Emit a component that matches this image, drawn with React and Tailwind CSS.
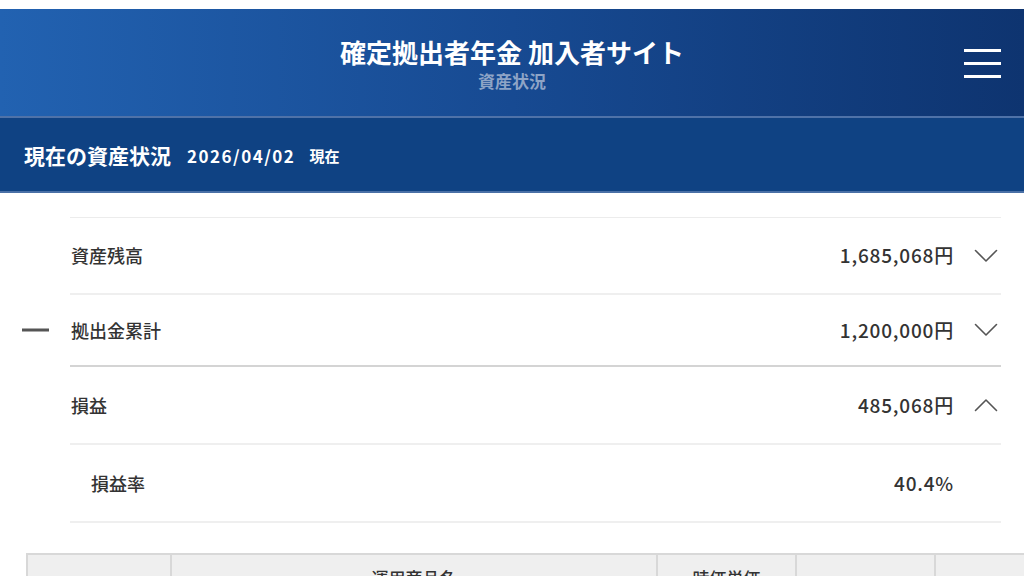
import React from 'react';

const FONT = { fontFamily: '"Noto Sans CJK JP", "Noto Sans", sans-serif' };

const Chevron = ({ up }) => (
  <svg width="24" height="14" viewBox="0 0 24 14" fill="none" stroke="#555" strokeWidth="1.6" strokeLinecap="round" strokeLinejoin="round">
    {up ? <path d="M1.5 12.5 L12 2 L22.5 12.5" /> : <path d="M1.5 1.5 L12 12 L22.5 1.5" />}
  </svg>
);

const rows = [
  { label: '資産残高', value: '1,685,068円', icon: 'down', h: 'h-[77px]' },
  { label: '拠出金累計', value: '1,200,000円', icon: 'down', h: 'h-[72px]', dash: true, strong: true },
  { label: '損益', value: '485,068円', icon: 'up', h: 'h-[78px]' },
  { label: '損益率', value: '40.4%', h: 'h-[78px]', indent: true },
];

export default function App() {
  return (
    <div className="w-[1024px] min-h-[576px] bg-white overflow-hidden" style={FONT}>
      <div className="h-[9px] bg-white" />

      {/* header */}
      <header className="relative h-[109px] bg-gradient-to-r from-[#2262b1] via-[#174a92] to-[#0e3470] border-b-2 border-[#4f72a8] flex flex-col items-center justify-center">
        <h1 className="text-white text-[26px] font-bold leading-none mt-[2px]">確定拠出者年金 加入者サイト</h1>
        <p className="text-[#8ea4c6] text-[17px] font-bold leading-none mt-[7px]">資産状況</p>
        <button className="absolute right-[23px] top-[40px] flex flex-col gap-[10px]">
          <span className="block w-[37px] h-[3px] bg-white" />
          <span className="block w-[37px] h-[3px] bg-white" />
          <span className="block w-[37px] h-[3px] bg-white" />
        </button>
      </header>

      {/* status bar */}
      <div className="h-[75px] bg-[#0f4283] border-b-2 border-[#4a70a6] flex items-center px-6 pt-[3px] text-white">
        <span className="text-[21px] font-bold">現在の資産状況</span>
        <span className="text-[17px] font-bold ml-[16px] tracking-[1.5px]">2026/04/02</span>
        <span className="text-[15px] font-bold ml-[14px]">現在</span>
      </div>

      {/* summary list */}
      <div className="mt-[24px] ml-[70px] mr-[23px] border-t border-[#ececec]">
        {rows.map((r) => (
          <div
            key={r.label}
            className={`relative flex items-center ${r.h} ${r.strong ? 'border-b-2 border-[#d4d4d4]' : 'border-b-2 border-[#efefef]'}`}
          >
            {r.dash && <span className="absolute left-[-48px] top-1/2 w-[27px] h-[3px] bg-[#555] -translate-y-1/2" />}
            <span className={`text-[18px] font-medium text-[#333] ${r.indent ? 'ml-[21px]' : 'ml-[1px]'}`}>{r.label}</span>
            <span className="ml-auto text-[19px] font-medium text-[#333] tracking-[0.8px]">{r.value}</span>
            <span className="w-[47px] flex justify-end items-center pr-[3px]">
              {r.icon && <Chevron up={r.icon === 'up'} />}
            </span>
          </div>
        ))}
      </div>

      {/* holdings table */}
      <div className="mt-[30px] ml-[26px] overflow-hidden">
        <table className="w-[1100px] border-collapse text-[#333]">
          <thead>
            <tr className="bg-[#efefef] text-[17px]">
              <th className="w-[144px] border-2 border-[#d8d8d8] h-[60px]"></th>
              <th className="w-[486px] border-2 border-[#d8d8d8] align-top pt-[10px] font-medium">運用商品名</th>
              <th className="w-[139px] border-2 border-[#d8d8d8] align-top pt-[10px] font-medium">時価単価</th>
              <th className="w-[139px] border-2 border-[#d8d8d8]"></th>
              <th className="border-2 border-[#d8d8d8]"></th>
            </tr>
          </thead>
        </table>
      </div>
    </div>
  );
}
